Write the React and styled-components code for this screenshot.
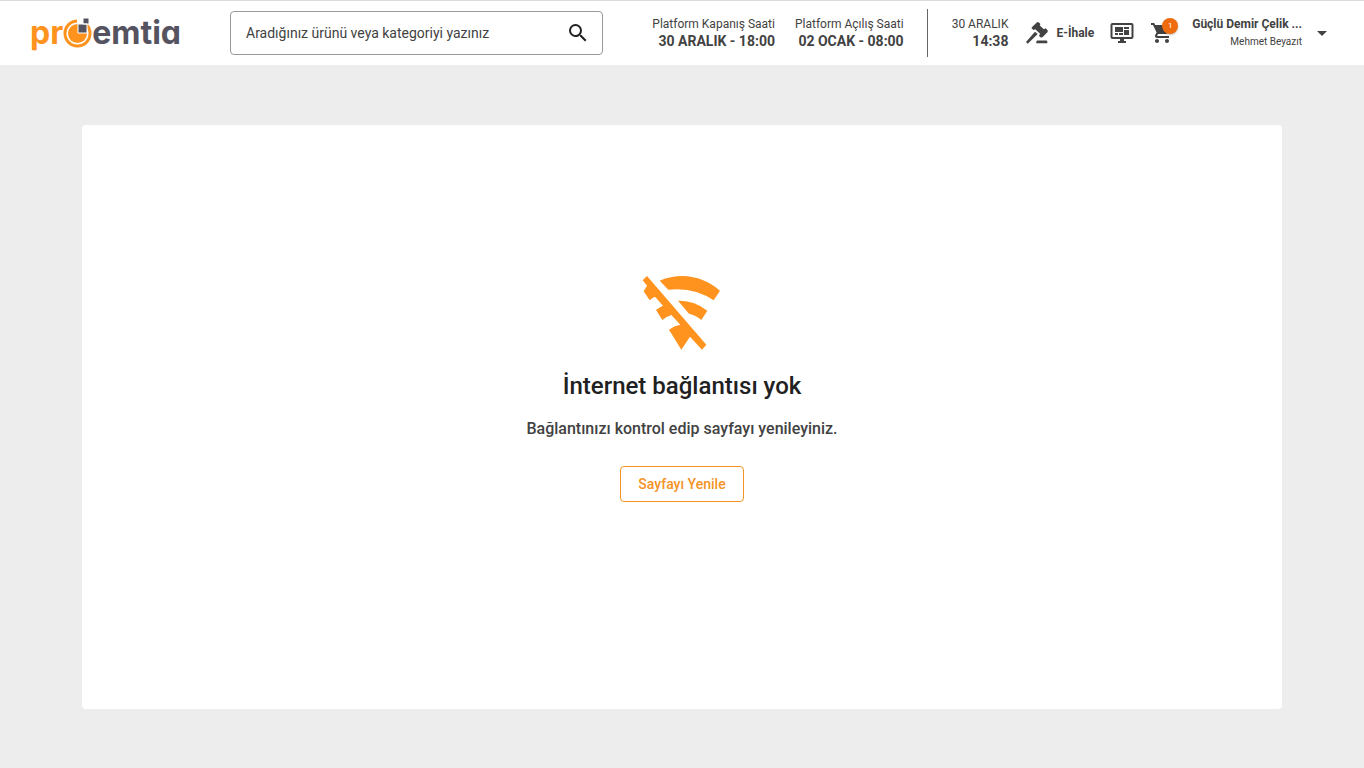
import React from "react";
import styled, { createGlobalStyle } from "styled-components";
import { MdSearch, MdShoppingCart, MdArrowDropDown } from "react-icons/md";

const GlobalStyle = createGlobalStyle`
  *, *::before, *::after { box-sizing: border-box; }
  body {
    margin: 0;
    background: #ededed;
    color: #424242;
    font-family: Roboto, "Noto Sans", sans-serif;
  }
  button, input { font: inherit; color: inherit; }
`;

const Header = styled.header`
  display: flex;
  align-items: center;
  height: 65px;
  padding: 0 30px;
  background: #fff;
  border-top: 1px solid #dcdcdc;
`;

const Logo = styled.a`
  display: flex;
  align-items: center;
  flex: none;
  width: 200px;
  color: #54535f;
  font: 700 32px/40px Inter, sans-serif;
  font-feature-settings: "cv11";
  text-decoration: none;
`;

const LogoAccent = styled.span`
  color: #ff931e;
`;

const LogoMark = styled.svg`
  flex: none;
  width: 29px;
  height: 34px;
`;

const Search = styled.form`
  display: flex;
  align-items: center;
  flex: 0 1 373px;
  height: 44px;
  padding: 0 12px 0 15px;
  border: 1px solid #999;
  border-radius: 4px;
`;

const SearchInput = styled.input`
  flex: 1;
  min-width: 0;
  padding: 0;
  border: 0;
  outline: 0;
  background: none;
  font-size: 14px;
  &::placeholder { color: #424242; opacity: 1; }
`;

const IconButton = styled.button`
  display: flex;
  position: relative;
  padding: 0;
  border: 0;
  background: none;
  color: ${(p) => p.$color || "#424242"};
  cursor: pointer;
`;

const Tools = styled.div`
  display: flex;
  align-items: center;
  flex: none;
  margin-left: auto;
`;

const Times = styled.div`
  display: flex;
  align-items: center;
  gap: 20px;
  height: 48px;
  padding-right: 23px;
  margin-right: 24px;
  border-right: 1px solid #666;
`;

const TimeBlock = styled.div`
  display: flex;
  flex-direction: column;
  align-items: flex-end;
  white-space: nowrap;
`;

const TimeLabel = styled.span`
  font-size: 12px;
  line-height: 16px;
`;

const TimeValue = styled.time`
  font-size: 14px;
  line-height: 18px;
  font-weight: 700;
`;

const Nav = styled.nav`
  display: flex;
  align-items: center;
  gap: 16px;
  margin-left: 18px;
`;

const AuctionLink = styled.a`
  display: flex;
  align-items: center;
  gap: 8px;
  color: inherit;
  font-size: 12px;
  font-weight: 700;
  text-decoration: none;
`;

const Badge = styled.span`
  position: absolute;
  top: -3px;
  right: -4px;
  width: 16px;
  height: 16px;
  border-radius: 50%;
  background: #ef6c0e;
  box-shadow: 0 1px 2px #0004;
  color: #fff;
  font-size: 8px;
  line-height: 16px;
  text-align: center;
`;

const Account = styled.button`
  display: flex;
  align-items: center;
  gap: 8px;
  margin-left: 18px;
  padding: 0;
  border: 0;
  background: none;
  text-align: right;
  cursor: pointer;
`;

const AccountText = styled.span`
  display: flex;
  flex-direction: column;
  line-height: 18px;
`;

const Company = styled.span`
  font-size: 12px;
  font-weight: 700;
`;

const Person = styled.span`
  font-size: 10px;
`;

const Main = styled.main`
  padding: 60px 82px;
`;

const Card = styled.section`
  display: flex;
  flex-direction: column;
  align-items: center;
  max-width: 1200px;
  min-height: 584px;
  margin: 0 auto;
  padding: 150px 24px;
  border-radius: 4px;
  background: #fff;
`;

const OfflineIcon = styled.svg`
  width: 80px;
  height: 77px;
  fill: #ff931e;
`;

const Title = styled.h1`
  margin: 18px 0 0;
  color: #212121;
  font-size: 24px;
  line-height: 32px;
  font-weight: 500;
`;

const Message = styled.p`
  margin: 15px 0 0;
  font-size: 16px;
  line-height: 24px;
  font-weight: 500;
`;

const RefreshButton = styled.button`
  height: 36px;
  margin-top: 25px;
  padding: 0 17px;
  border: 1px solid #f39325;
  border-radius: 4px;
  background: #fff;
  color: #f39325;
  font-size: 14px;
  font-weight: 500;
  cursor: pointer;
`;

const TimeInfo = ({ label, value }) => (
  <TimeBlock>
    <TimeLabel>{label}</TimeLabel>
    <TimeValue>{value}</TimeValue>
  </TimeBlock>
);

const GavelIcon = () => (
  <svg width="22" height="22" viewBox="286 64 64 64" fill="currentColor" aria-hidden="true">
    <path d="M286 122 312 92 320 99 291 127Z" />
    <path d="M318 65 323 65 328 70 326 74 338 85 343 82 349 88 349 93 333 109 327 108 324 103 327 98 313 85 308 87 302 82 303 79Z" />
    <path d="M320 118h25q3 0 3 4v4h-32v-4q0-4 4-4Z" />
  </svg>
);

const MonitorIcon = () => (
  <svg width="24" height="22" viewBox="0 0 24 22" fill="currentColor" aria-hidden="true">
    <rect x="1.500" y="2" width="21" height="14" rx="1" fill="none" stroke="currentColor" strokeWidth="2" />
    <path d="M5 5h8v5H5zM14 5h5v2h-5zM14 8h5v5h-5zM5 11h3v2H5zM9 11h4v2H9zM10 17h4v2h2v2H8v-2h2z" />
  </svg>
);

export default function App() {
  return (
    <>
      <GlobalStyle />
      <Header>
        <Logo href="#" aria-label="proemtia">
          <LogoAccent>pr</LogoAccent>
          <LogoMark viewBox="0 0 29 34" aria-hidden="true">
            <circle cx="14.500" cy="17.500" r="12.500" fill="none" stroke="#ff931e" strokeWidth="3" />
            <circle cx="14.500" cy="17.500" r="9.500" fill="#ff931e" />
            <path d="M14 2h7v6h-7z" fill="#fff" />
            <path d="M15 8h9v9h-9zM20 2h6v6h-6z" fill="#54535f" stroke="#fff" strokeWidth="1" />
          </LogoMark>
          <span>emtia</span>
        </Logo>
        <Search role="search" onSubmit={(e) => e.preventDefault()}>
          <SearchInput
            type="text"
            aria-label="Ürün veya kategori ara"
            placeholder="Aradığınız ürünü veya kategoriyi yazınız"
          />
          <IconButton type="submit" aria-label="Ara" $color="#212121">
            <MdSearch size={24} />
          </IconButton>
        </Search>
        <Tools>
          <Times>
            <TimeInfo label="Platform Kapanış Saati" value="30 ARALIK - 18:00" />
            <TimeInfo label="Platform Açılış Saati" value="02 OCAK - 08:00" />
          </Times>
          <TimeInfo label="30 ARALIK" value="14:38" />
          <Nav>
            <AuctionLink href="#">
              <GavelIcon />
              E-İhale
            </AuctionLink>
            <IconButton type="button" aria-label="Ekran">
              <MonitorIcon />
            </IconButton>
            <IconButton type="button" aria-label="Sepet">
              <MdShoppingCart size={24} />
              <Badge>1</Badge>
            </IconButton>
          </Nav>
          <Account type="button">
            <AccountText>
              <Company>Güçlü Demir Çelik ...</Company>
              <Person>Mehmet Beyazıt</Person>
            </AccountText>
            <MdArrowDropDown size={24} />
          </Account>
        </Tools>
      </Header>
      <Main>
        <Card>
          <OfflineIcon viewBox="69 45 240 231" aria-hidden="true">
            <path d="M84 48 71 61 84 77 74 94 92 121Q99 114 108 110L132 137Q120 142 111 150L130 180Q142 169 157 165L184 194Q165 197 150 209L187 269 213 230 249 269 262 254Z" />
            <path d="M122 62Q155 48 190 48 255 50 303 92L284 121Q225 80 148 89Z" />
            <path d="M177 122Q225 120 265 152L247 180Q230 165 210 161Z" />
          </OfflineIcon>
          <Title>İnternet bağlantısı yok</Title>
          <Message>Bağlantınızı kontrol edip sayfayı yenileyiniz.</Message>
          <RefreshButton type="button">Sayfayı Yenile</RefreshButton>
        </Card>
      </Main>
    </>
  );
}
